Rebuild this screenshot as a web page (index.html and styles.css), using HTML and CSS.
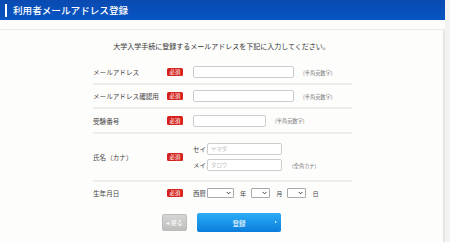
FILE: index.html
```html
<!DOCTYPE html>
<html lang="ja">
<head>
    <meta charset="UTF-8">
    <meta name="viewport" content="width=device-width, initial-scale=1.0">
    <title>利用者メールアドレス登録</title>
    <link rel="stylesheet" href="styles.css">
</head>
<body>
    <div class="page">
        <div class="head"><h1>利用者メールアドレス登録</h1></div>
        <div class="card">
            <p class="lead">大学入学手続に登録するメールアドレスを下記に入力してください。</p>
            <div class="form">
                <div class="row">
                    <div class="label">メールアドレス</div>
                    <div><span class="badge">必須</span></div>
                    <div class="field">
                        <input class="text mail" type="text">
                        <span class="note">(半角英数字)</span>
                    </div>
                </div>
                <div class="row">
                    <div class="label">メールアドレス確認用</div>
                    <div><span class="badge">必須</span></div>
                    <div class="field">
                        <input class="text mail" type="text">
                        <span class="note">(半角英数字)</span>
                    </div>
                </div>
                <div class="row row-exam">
                    <div class="label">受験番号</div>
                    <div><span class="badge">必須</span></div>
                    <div class="field">
                        <input class="text exam" type="text">
                        <span class="note">(半角英数字)</span>
                    </div>
                </div>
                <div class="row row-name">
                    <div class="label">氏名（カナ）</div>
                    <div><span class="badge">必須</span></div>
                    <div class="field name-field">
                        <div class="name-line">
                            <span class="sub">セイ</span>
                            <input class="text kana" type="text" placeholder="ヤマダ">
                        </div>
                        <div class="name-line">
                            <span class="sub">メイ</span>
                            <input class="text kana" type="text" placeholder="タロウ">
                            <span class="note note-kana">(全角カナ)</span>
                        </div>
                    </div>
                </div>
                <div class="row row-birth">
                    <div class="label">生年月日</div>
                    <div><span class="badge">必須</span></div>
                    <div class="field">
                        <span class="sub">西暦</span>
                        <span class="sel sel-year"><select></select><svg viewBox="0 0 6 4"><path d="M0.6 0.6 L3 3 L5.4 0.6" fill="none" stroke="#333" stroke-width="1.1"/></svg></span>
                        <span class="unit">年</span>
                        <span class="sel"><select></select><svg viewBox="0 0 6 4"><path d="M0.6 0.6 L3 3 L5.4 0.6" fill="none" stroke="#333" stroke-width="1.1"/></svg></span>
                        <span class="unit">月</span>
                        <span class="sel"><select></select><svg viewBox="0 0 6 4"><path d="M0.6 0.6 L3 3 L5.4 0.6" fill="none" stroke="#333" stroke-width="1.1"/></svg></span>
                        <span class="unit">日</span>
                    </div>
                </div>
            </div>
            <div class="buttons">
                <button class="btn-back">◂ 戻る</button>
                <button class="btn-submit">登録</button>
            </div>
        </div>
    </div>
</body>
</html>
```

FILE: styles.css
```css
body {
    margin: 0;
    background: #f3f3f2;
    font-family: "Noto Sans CJK JP", sans-serif;
    color: #444;
}
.page {
    width: 445px;
    height: 242px;
    background: #fdfdfc;
    overflow: hidden;
}
.head {
    height: 20px;
    background: linear-gradient(#0a4ab1, #0655c3);
    display: flex;
    align-items: center;
    padding-left: 5px;
}
.head h1 {
    margin: 0;
    font-size: 9.6px;
    font-weight: 500;
    color: #fff;
    display: flex;
    align-items: center;
}
.head h1::before {
    content: "";
    width: 2px;
    height: 13px;
    background: #fff;
    margin-right: 6px;
}
.card {
    margin-top: 9px;
    border-top: 1px solid #ebebea;
    border-right: 2px solid #e6e6e5;
    background: #fdfdfc;
    height: 220px;
}
.lead {
    margin: 0;
    padding-top: 11px;
    text-align: center;
    font-size: 7px;
    line-height: 10px;
    color: #333;
}
.form {
    margin: 10px 0 0 93px;
    width: 259px;
}
.row {
    display: grid;
    grid-template-columns: 74px 26px 1fr;
    align-items: center;
    height: 24px;
    box-sizing: border-box;
    border-bottom: 2px solid #ededec;
}
.row-exam {
    height: 25px;
}
.row-name {
    height: 48px;
}
.row-birth {
    height: 22px;
    border-bottom: none;
}
.label {
    font-size: 6.6px;
    color: #444;
}
.badge {
    display: flex;
    justify-content: center;
    align-items: center;
    width: 16px;
    height: 8.5px;
    background: #d5211c;
    border-radius: 1.5px;
    color: #fff;
    font-size: 5.4px;
}
.field {
    display: flex;
    align-items: center;
}
.text {
    box-sizing: border-box;
    height: 12px;
    margin: 0;
    padding: 0 3px;
    border: 1px solid #cdcdcd;
    border-radius: 2px;
    background: #fff;
    font-family: inherit;
    font-size: 5.4px;
}
.text::placeholder {
    color: #c2c2c2;
}
.mail {
    width: 101px;
}
.exam {
    width: 73px;
}
.kana {
    width: 75px;
}
.note {
    margin-left: 9px;
    font-size: 5.2px;
    color: #777;
}
.note-kana {
    margin-left: 10px;
}
.name-field {
    flex-direction: column;
    align-items: flex-start;
    gap: 4px;
}
.name-line {
    display: flex;
    align-items: center;
}
.sub {
    width: 14px;
    font-size: 6.4px;
    color: #444;
}
.sel {
    position: relative;
    display: flex;
    width: 19px;
    height: 10px;
}
.sel-year {
    width: 27px;
}
.sel select {
    appearance: none;
    box-sizing: border-box;
    width: 100%;
    height: 100%;
    margin: 0;
    padding: 0;
    border: 1px solid #a9a9a9;
    border-radius: 1px;
    background: #fff;
}
.sel svg {
    position: absolute;
    right: 3px;
    top: 3px;
    width: 5px;
    height: 4px;
}
.unit {
    margin: 0 5px 0 6px;
    font-size: 6.2px;
    color: #444;
}
.buttons {
    display: flex;
    justify-content: center;
    align-items: center;
    gap: 10px;
    margin-top: 9px;
}
button {
    border: none;
    margin: 0;
    padding: 0;
    font-family: inherit;
    color: #fff;
    cursor: pointer;
}
.btn-back {
    width: 25px;
    height: 17px;
    border: 1px solid #bdbdbd;
    border-radius: 2px;
    background: linear-gradient(#d6d6d5, #bebebd);
    font-size: 6px;
}
.btn-submit {
    position: relative;
    width: 84px;
    height: 19px;
    border-radius: 2px;
    background: linear-gradient(#2cadf7, #0a7ddb);
    font-size: 6.6px;
}
.btn-submit::after {
    content: "";
    position: absolute;
    right: 4px;
    top: 8px;
    border-left: 2px solid #fff;
    border-top: 1.5px solid transparent;
    border-bottom: 1.5px solid transparent;
}
```
